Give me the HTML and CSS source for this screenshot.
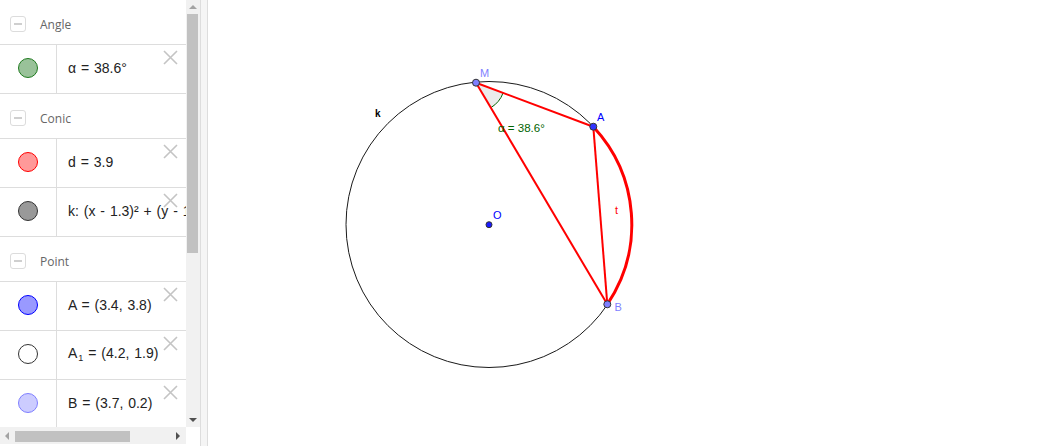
FILE: index.html
```html
<!DOCTYPE html>
<html>
<head>
<meta charset="utf-8">
<link rel="stylesheet" href="styles.css">
</head>
<body>
<div class="app">
  <div class="algebra">
    <div class="algebra-main">
      <div class="list">
        <div class="group-header"><span class="toggle"><span class="minus"></span></span><span class="group-title">Angle</span></div>
        <div class="row">
          <div class="marble-cell"><span class="marble m-angle"></span></div>
          <div class="value"><span class="formula">α = 38.6°</span></div>
          <span class="delete"><svg viewBox="0 0 15 15" width="15" height="15"><path d="M1 1 L14 14 M14 1 L1 14" stroke="#c4c4c4" stroke-width="1.6" fill="none"/></svg></span>
        </div>
        <div class="group-header"><span class="toggle"><span class="minus"></span></span><span class="group-title">Conic</span></div>
        <div class="row">
          <div class="marble-cell"><span class="marble m-d"></span></div>
          <div class="value"><span class="formula">d = 3.9</span></div>
          <span class="delete"><svg viewBox="0 0 15 15" width="15" height="15"><path d="M1 1 L14 14 M14 1 L1 14" stroke="#c4c4c4" stroke-width="1.6" fill="none"/></svg></span>
        </div>
        <div class="row">
          <div class="marble-cell"><span class="marble m-k"></span></div>
          <div class="value"><span class="formula">k: (x - 1.3)² + (y - 1.7)² = 20.38</span></div>
          <span class="delete"><svg viewBox="0 0 15 15" width="15" height="15"><path d="M1 1 L14 14 M14 1 L1 14" stroke="#c4c4c4" stroke-width="1.6" fill="none"/></svg></span>
        </div>
        <div class="group-header"><span class="toggle"><span class="minus"></span></span><span class="group-title">Point</span></div>
        <div class="row">
          <div class="marble-cell"><span class="marble m-a"></span></div>
          <div class="value"><span class="formula">A = (3.4, 3.8)</span></div>
          <span class="delete"><svg viewBox="0 0 15 15" width="15" height="15"><path d="M1 1 L14 14 M14 1 L1 14" stroke="#c4c4c4" stroke-width="1.6" fill="none"/></svg></span>
        </div>
        <div class="row">
          <div class="marble-cell"><span class="marble m-a1"></span></div>
          <div class="value"><span class="formula">A<sub>1</sub> = (4.2, 1.9)</span></div>
          <span class="delete"><svg viewBox="0 0 15 15" width="15" height="15"><path d="M1 1 L14 14 M14 1 L1 14" stroke="#c4c4c4" stroke-width="1.6" fill="none"/></svg></span>
        </div>
        <div class="row">
          <div class="marble-cell"><span class="marble m-b"></span></div>
          <div class="value"><span class="formula">B = (3.7, 0.2)</span></div>
          <span class="delete"><svg viewBox="0 0 15 15" width="15" height="15"><path d="M1 1 L14 14 M14 1 L1 14" stroke="#c4c4c4" stroke-width="1.6" fill="none"/></svg></span>
        </div>
      </div>
      <div class="vscroll">
        <div class="vbtn"><span class="arrow-up"></span></div>
        <div class="vtrack"><div class="vthumb"></div></div>
        <div class="vbtn"><span class="arrow-down"></span></div>
      </div>
    </div>
    <div class="hbar">
      <div class="hbtn"><span class="arrow-left"></span></div>
      <div class="hthumb"></div>
      <div class="hspacer"></div>
      <div class="hbtn hbtn-right"><span class="arrow-right"></span></div>
    </div>
  </div>
  <div class="splitter"></div>
  <div class="canvas">
    <svg class="graphics" width="832" height="446" viewBox="208 0 832 446">
      <circle cx="489" cy="224.5" r="143" fill="none" stroke="#1a1a1a" stroke-width="1"/>
      <path d="M476 82.7 L503.1 92.9 A29 29 0 0 1 490.8 107.7 Z" fill="#e6e6e6" fill-opacity="0.8"/>
      <path d="M503.1 92.9 A29 29 0 0 1 490.8 107.7" fill="none" stroke="#006400" stroke-width="1"/>
      <path d="M593.3 126.7 A143 143 0 0 1 607.3 304.3" fill="none" stroke="#ff0000" stroke-width="3"/>
      <line x1="476" y1="82.7" x2="593.3" y2="126.7" stroke="#ff0000" stroke-width="2"/>
      <line x1="476" y1="82.7" x2="607.3" y2="304.3" stroke="#ff0000" stroke-width="2"/>
      <line x1="593.3" y1="126.7" x2="607.3" y2="304.3" stroke="#ff0000" stroke-width="2"/>
      <circle cx="476" cy="82.7" r="3.5" fill="#7f7fff" stroke="#333" stroke-width="1"/>
      <circle cx="593.3" cy="126.7" r="3.5" fill="#3333ff" stroke="#333" stroke-width="1"/>
      <circle cx="607.3" cy="304.3" r="3.5" fill="#7f7fff" stroke="#333" stroke-width="1"/>
      <circle cx="489" cy="224.7" r="3" fill="#1a1aff" stroke="#333" stroke-width="1"/>
      <text class="lbl lbl-light" x="480" y="77">M</text>
      <text class="lbl lbl-blue" x="597" y="121">A</text>
      <text class="lbl lbl-light" x="614.5" y="311">B</text>
      <text class="lbl lbl-blue" x="493" y="219">O</text>
      <text class="lbl lbl-black" x="375" y="117">k</text>
      <text class="lbl lbl-red" x="615" y="214">t</text>
      <text class="lbl lbl-green" x="498" y="132">α = 38.6°</text>
    </svg>
  </div>
</div>
</body>
</html>
```

FILE: styles.css
```css
html, body {
  margin: 0;
  padding: 0;
}
body {
  width: 1040px;
  height: 446px;
  overflow: hidden;
  background: #ffffff;
  font-family: "Liberation Sans", Arial, sans-serif;
  color: #222;
}
.app {
  display: flex;
  height: 446px;
}
.algebra {
  width: 200px;
  display: flex;
  flex-direction: column;
}
.algebra-main {
  display: flex;
  height: 427px;
}
.list {
  width: 186px;
  overflow: hidden;
}
.group-header {
  box-sizing: border-box;
  height: 45px;
  border-bottom: 1px solid #dddddd;
  padding: 4px 0 0 10px;
  display: flex;
  align-items: center;
}
.toggle {
  box-sizing: border-box;
  width: 16px;
  height: 16px;
  border: 1px solid #dcdcdc;
  border-radius: 3px;
  display: flex;
  align-items: center;
  justify-content: center;
}
.minus {
  width: 8px;
  height: 2px;
  background: #cfcfcf;
}
.group-title {
  margin-left: 14px;
  font-size: 12px;
  color: #666666;
  font-family: "Open Sans", "Liberation Sans", sans-serif;
}
.row {
  position: relative;
  box-sizing: border-box;
  height: 49px;
  border-bottom: 1px solid #dddddd;
  display: flex;
}
.marble-cell {
  width: 56px;
  border-right: 1px solid #dddddd;
  display: flex;
  align-items: center;
  justify-content: center;
  padding-bottom: 3px;
  box-sizing: content-box;
}
.marble {
  box-sizing: border-box;
  width: 20px;
  height: 20px;
  border-radius: 50%;
  border: 1px solid #333;
}
.m-angle { background: #99c299; border-color: #1f7a1f; }
.m-d { background: #ff9999; border-color: #ff0000; }
.m-k { background: #999999; border-color: #333333; }
.m-a { background: #9999ff; border-color: #0000ff; }
.m-a1 { background: #ffffff; border-color: #333333; }
.m-b { background: #ccccff; border-color: #7f7fff; }
.value {
  flex: 1;
  min-width: 0;
  overflow: hidden;
  padding-left: 11px;
  padding-bottom: 3px;
  display: flex;
  align-items: center;
}
.formula {
  white-space: nowrap;
  font-size: 14px;
  word-spacing: 1px;
  color: #222;
}
.formula sub {
  font-size: 9px;
  vertical-align: -3px;
  margin-left: 1px;
}
.delete {
  position: absolute;
  right: 8px;
  top: 5px;
  width: 15px;
  height: 15px;
}
.delete svg {
  display: block;
}
.vscroll {
  width: 14px;
  background: #f1f1f1;
  display: flex;
  flex-direction: column;
}
.vbtn {
  height: 14px;
  display: flex;
  align-items: center;
  justify-content: center;
}
.vtrack {
  flex: 1;
}
.vthumb {
  margin-left: 1px;
  width: 11px;
  height: 239px;
  background: #c1c1c1;
}
.arrow-up {
  width: 0;
  height: 0;
  border-left: 4px solid transparent;
  border-right: 4px solid transparent;
  border-bottom: 4px solid #a3a3a3;
  margin-left: -1px;
}
.arrow-down {
  width: 0;
  height: 0;
  border-left: 4px solid transparent;
  border-right: 4px solid transparent;
  border-top: 4px solid #505050;
  margin-left: -1px;
}
.hbar {
  width: 186px;
  height: 17px;
  background: #f1f1f1;
  display: flex;
  align-items: flex-start;
}
.hbtn {
  width: 13px;
  height: 17px;
  display: flex;
  align-items: center;
  justify-content: center;
}
.hbtn-right {
  width: 16px;
}
.hthumb {
  margin-left: 2px;
  margin-top: 4px;
  width: 115px;
  height: 11px;
  background: #c1c1c1;
}
.hspacer {
  flex: 1;
}
.arrow-left {
  width: 0;
  height: 0;
  border-top: 4px solid transparent;
  border-bottom: 4px solid transparent;
  border-right: 4px solid #a3a3a3;
}
.arrow-right {
  width: 0;
  height: 0;
  border-top: 4px solid transparent;
  border-bottom: 4px solid transparent;
  border-left: 4px solid #505050;
}
.splitter {
  width: 6px;
  border-left: 1px solid #dddddd;
  border-right: 1px solid #dddddd;
  background: #f5f5f5;
}
.canvas {
  flex: 1;
  background: #ffffff;
}
.graphics {
  display: block;
}
.lbl {
  font-family: "Liberation Sans", Arial, sans-serif;
  font-size: 11px;
}
.lbl-light { fill: #7f7fff; }
.lbl-blue { fill: #0000ff; }
.lbl-black { fill: #000000; font-weight: bold; font-size: 10px; }
.lbl-red { fill: #ff0000; }
.lbl-green { fill: #006400; font-size: 11.5px; }
```
